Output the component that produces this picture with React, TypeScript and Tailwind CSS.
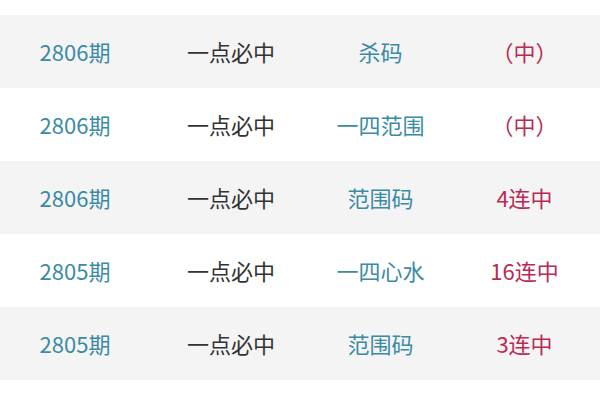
import React from "react";

const rows = [
  { issue: "2806期", tip: "一点必中", type: "杀码", result: "（中）" },
  { issue: "2806期", tip: "一点必中", type: "一四范围", result: "（中）" },
  { issue: "2806期", tip: "一点必中", type: "范围码", result: "4连中" },
  { issue: "2805期", tip: "一点必中", type: "一四心水", result: "16连中" },
  { issue: "2805期", tip: "一点必中", type: "范围码", result: "3连中" },
];

export default function App() {
  return (
    <div
      className="w-[600px] h-[400px] bg-white pt-[15px] overflow-hidden"
      style={{ fontFamily: '"Noto Sans CJK SC", "Noto Sans", sans-serif' }}
    >
      {rows.map((r, i) => (
        <div
          key={i}
          className={`grid grid-cols-[150px_162px_137px_151px] h-[73px] items-center text-[22px] ${i % 2 === 0 ? "bg-[#f4f4f4]" : "bg-white"}`}
        >
          <div className="text-center text-[#3b8ba5]">{r.issue}</div>
          <div className="text-center text-[#333333]">{r.tip}</div>
          <div className="text-center text-[#3b8ba5]">{r.type}</div>
          <div className="text-center text-[#bb2a52]">{r.result}</div>
        </div>
      ))}
    </div>
  );
}
